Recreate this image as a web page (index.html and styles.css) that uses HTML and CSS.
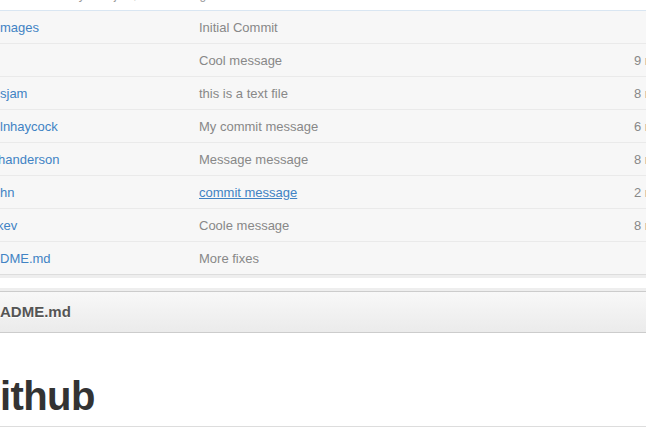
FILE: index.html
```html
<!DOCTYPE html>
<html>
<head>
<meta charset="utf-8">
<link rel="stylesheet" href="styles.css">
</head>
<body>
<div class="page">
  <div class="commit-bar">
    <span class="commit-info">Last commit by tomsjam, 2 months ago</span>
    <span class="commit-ids">ca5c6d8 · ca5c6d8 · <b>8d</b></span>
  </div>
  <div class="files-wrap">
    <div class="files">
      <div class="row"><a class="name">mages</a><span class="msg">Initial Commit</span><span class="date"></span></div>
      <div class="row"><a class="name"></a><span class="msg">Cool message</span><span class="date">9 months ago</span></div>
      <div class="row"><a class="name">sjam</a><span class="msg">this is a text file</span><span class="date">8 months ago</span></div>
      <div class="row"><a class="name">lnhaycock</a><span class="msg">My commit message</span><span class="date">6 months ago</span></div>
      <div class="row"><a class="name cut">handerson</a><span class="msg">Message message</span><span class="date">8 months ago</span></div>
      <div class="row"><a class="name">hn</a><a class="msg msg-link">commit message</a><span class="date">2 months ago</span></div>
      <div class="row"><a class="name cut-more">kev</a><span class="msg">Coole message</span><span class="date">8 months ago</span></div>
      <div class="row"><a class="name">DME.md</a><span class="msg">More fixes</span><span class="date"></span></div>
    </div>
  </div>
  <div class="readme">
    <div class="readme-head">ADME.md</div>
    <div class="readme-body">
      <h1 class="title">ithub</h1>
    </div>
  </div>
</div>
</body>
</html>
```

FILE: styles.css
```css
html, body {
  margin: 0;
  padding: 0;
  background: #fff;
  overflow: hidden;
}

.page {
  width: 700px;
  font-family: "Liberation Sans", Arial, Helvetica, sans-serif;
  font-size: 13px;
}

.commit-bar {
  display: flex;
  justify-content: space-between;
  margin-top: -13px;
  height: 23px;
  line-height: 16px;
  font-size: 12px;
  color: #999;
  padding: 0 56px 0 4px;
  border-bottom: 1px solid #d9e6f2;
}

.commit-ids b {
  color: #333;
}

.files-wrap {
  border-bottom: 3px solid #eeeeee;
}

.files {
  background: #f7f7f7;
  border-bottom: 1px solid #dddddd;
}

.row {
  display: grid;
  grid-template-columns: 199px 435px 1fr;
  align-items: center;
  height: 32px;
  border-bottom: 1px solid #eaeaea;
  white-space: nowrap;
}

.row:last-child {
  border-bottom: none;
}

.name {
  color: #4183c4;
  text-decoration: none;
}

.cut {
  margin-left: -2px;
}

.cut-more {
  margin-left: -3px;
}

.msg {
  color: #888;
}

.msg-link {
  color: #4183c4;
  text-decoration: underline;
  justify-self: start;
}

.date {
  color: #888;
}

.readme {
  margin-top: 10px;
  border-top: 3px solid #eeeeee;
}

.readme-head {
  height: 40px;
  line-height: 40px;
  border-top: 1px solid #cccccc;
  border-bottom: 1px solid #cccccc;
  background: linear-gradient(#f8f8f8, #ebebeb);
  font-size: 15px;
  font-weight: bold;
  color: #555;
  text-shadow: 0 1px 0 #fff;
}

.readme-body {
  padding-top: 39px;
}

.title {
  margin: 0;
  font-size: 40px;
  line-height: 48px;
  font-weight: bold;
  letter-spacing: -0.6px;
  color: #333;
  padding-bottom: 6px;
  border-bottom: 1px solid #dddddd;
}
```
